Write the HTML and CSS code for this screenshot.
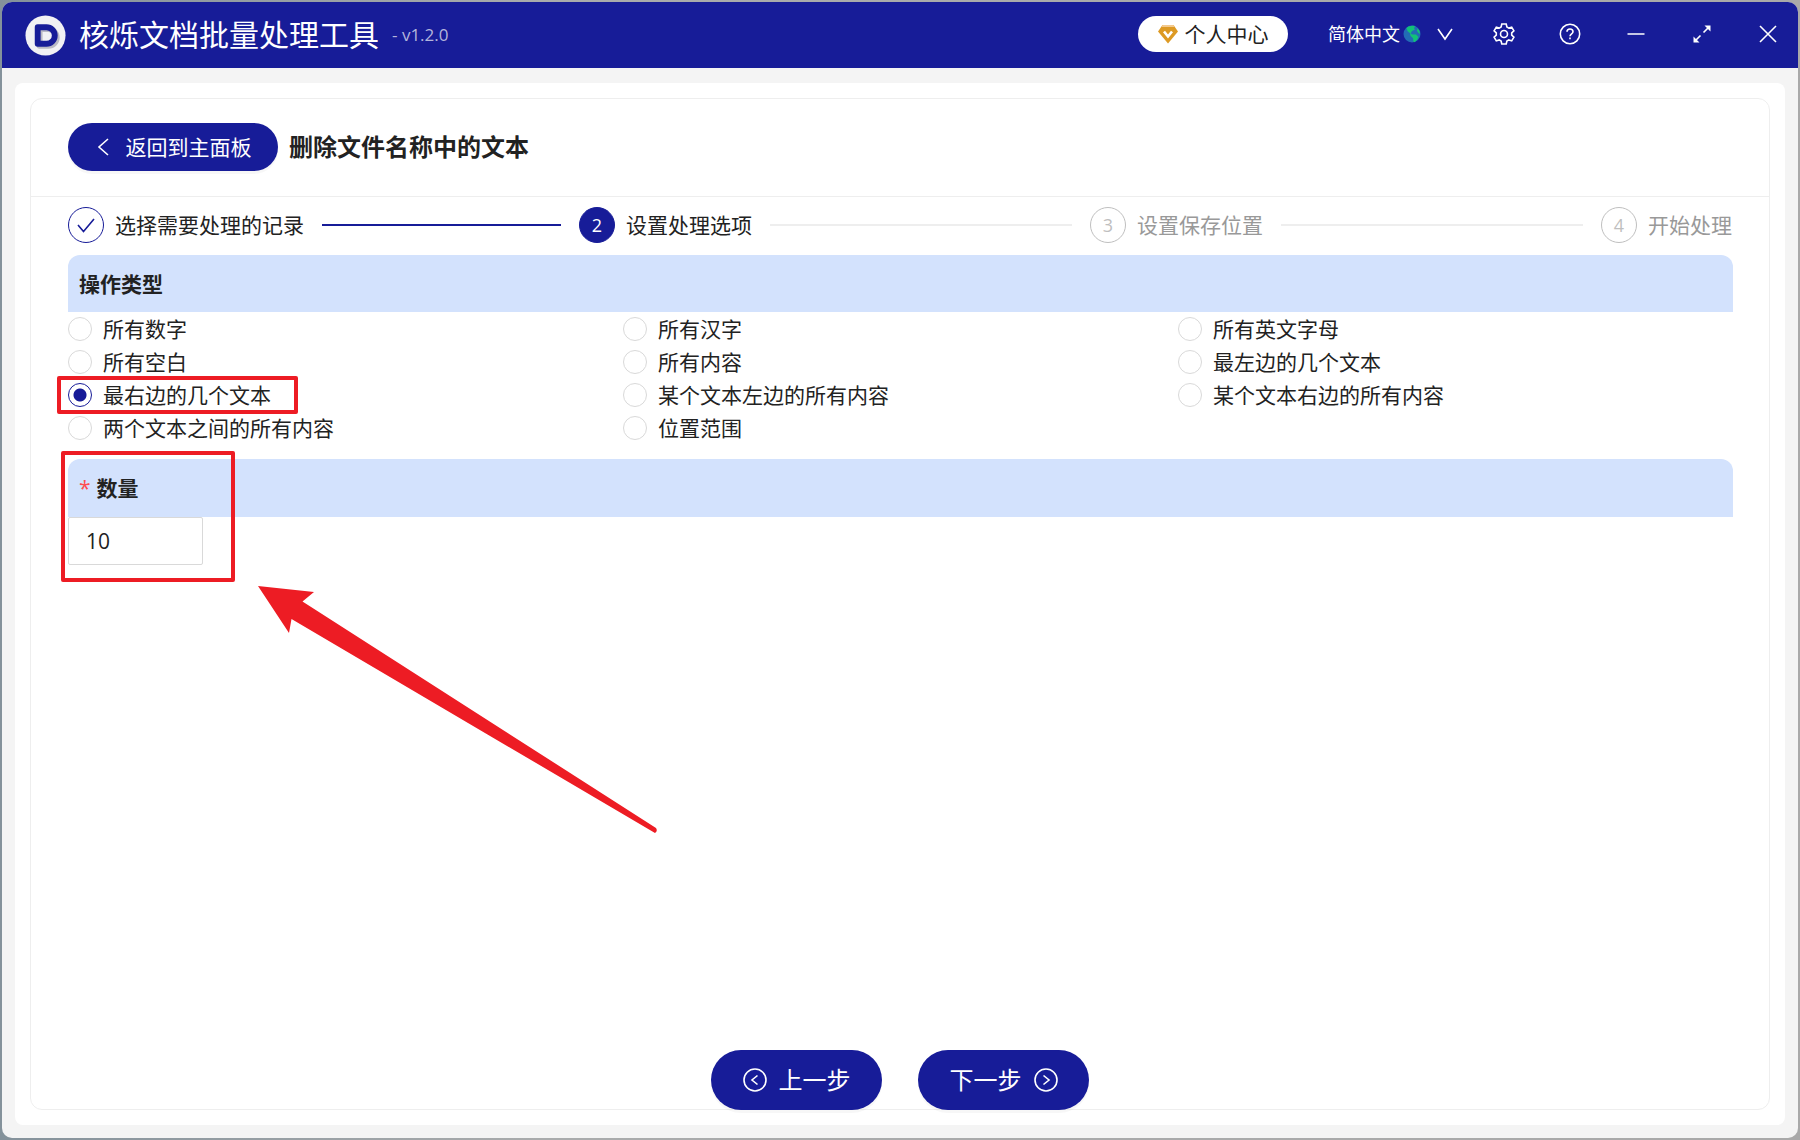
FILE: index.html
```html
<!DOCTYPE html>
<html lang="zh-CN">
<head>
<meta charset="utf-8">
<title>核烁文档批量处理工具</title>
<link rel="stylesheet" href="styles.css">
</head>
<body>
<div class="window">
  <header class="titlebar">
    <svg class="logo" viewBox="0 0 42 42" aria-hidden="true">
      <circle cx="21" cy="21" r="20.5" fill="#f1f1f4"/>
      <path d="M14 12.500h9a8.500 8.500 0 0 1 0 17h-9z" transform="translate(1 2)" fill="none" stroke="#b9b9c4" stroke-width="6" stroke-linejoin="round"/>
      <path d="M13 12.500h9a8.500 8.500 0 0 1 0 17h-9z" fill="none" stroke="#171c98" stroke-width="6" stroke-linejoin="round"/>
    </svg>
    <h1 class="app-name">核烁文档批量处理工具</h1>
    <span class="version">- v1.2.0</span>
    <div class="tools">
      <button class="account" type="button">
        <svg width="20" height="20" viewBox="0 0 20 20" aria-hidden="true">
          <path d="M4.500 1h11L20 7.500 10 19.500 0 7.500z" fill="#dd9a24"/>
          <path d="M4.500 1h11l1.500 2H3z" fill="#f3c98d"/>
          <path d="M6 7.500l4 5 4-5" fill="none" stroke="#fff" stroke-width="2.600"/>
        </svg>
        个人中心
      </button>
      <button class="language" type="button">
        简体中文
        <svg class="globe" width="18" height="18" viewBox="0 0 18 18" aria-hidden="true">
          <circle cx="9" cy="9" r="8.500" fill="#226cb5"/>
          <path d="M3.500 3C6 .6 9 .2 12 1l-1 2.500 1 1-3 1.500-1.500 2.500 2 1 3.500 0 2.500 2.500-1.500 3-2.500 2.200-1-.5-.5-3.500-2.500-2.500-.5-2.500L4.500 6zM14.500 3.200l2 2.800.5 3-2-1.500-1-2z" fill="#12c277"/>
        </svg>
        <svg class="caret" width="16" height="16" viewBox="0 0 16 16" aria-hidden="true"><path d="M1 3l7 10 7-10"/></svg>
      </button>
      <div class="window-actions">
        <button class="icon-button" type="button" aria-label="设置">
          <svg width="24" height="24" viewBox="0 0 24 24"><path d="M9.800 2h4.400l.7 3 1.900 1.100 2.900-1 2.200 3.800-2.200 2v2.200l2.200 2-2.200 3.800-2.900-1-1.900 1.100-.7 3H9.800l-.7-3-1.900-1.100-2.900 1-2.200-3.800 2.200-2v-2.200l-2.200-2 2.200-3.800 2.900 1L9.100 5z"/><circle cx="12" cy="12" r="3.500"/></svg>
        </button>
        <button class="icon-button" type="button" aria-label="帮助">
          <svg width="24" height="24" viewBox="0 0 24 24"><circle cx="12" cy="12" r="9.700"/><path d="M9 9.800c0-1.700 1.300-2.800 3-2.800s3 1.100 3 2.700c0 2-3 2.200-3 4.500M12 15.500v1.800"/></svg>
        </button>
        <button class="icon-button" type="button" aria-label="最小化">
          <svg width="24" height="24" viewBox="0 0 24 24"><path d="M3.500 12h17"/></svg>
        </button>
        <button class="icon-button" type="button" aria-label="最大化">
          <svg width="24" height="24" viewBox="0 0 24 24"><path d="M13.500 10.500l5-5M10.500 13.500l-5 5"/><path class="solid" d="M14.500 3.500h6v6zM3.500 14.500v6h6z"/></svg>
        </button>
        <button class="icon-button" type="button" aria-label="关闭">
          <svg width="24" height="24" viewBox="0 0 24 24"><path d="M4 4l16 16M20 4L4 20"/></svg>
        </button>
      </div>
    </div>
  </header>

  <main class="sheet">
    <div class="panel">
      <div class="panel-head">
        <button class="back" type="button">
          <svg width="12" height="20" viewBox="0 0 12 20" aria-hidden="true"><path d="M11 2L2 10l9 8"/></svg>
          返回到主面板
        </button>
        <h2 class="page-title">删除文件名称中的文本</h2>
      </div>

      <ol class="steps">
        <li class="step done">
          <span class="step-mark"><svg width="20" height="20" viewBox="0 0 20 20" aria-label="已完成"><path d="M2 10l5.500 6.500L18 4"/></svg></span>
          <span class="step-label">选择需要处理的记录</span>
        </li>
        <li class="step current" aria-current="step"><span class="step-mark">2</span><span class="step-label">设置处理选项</span></li>
        <li class="step"><span class="step-mark">3</span><span class="step-label">设置保存位置</span></li>
        <li class="step"><span class="step-mark">4</span><span class="step-label">开始处理</span></li>
      </ol>

      <form class="form">
        <fieldset class="group">
          <legend class="band">操作类型</legend>
          <div class="options">
            <label class="option"><input type="radio" name="kind">所有数字</label>
            <label class="option"><input type="radio" name="kind">所有汉字</label>
            <label class="option"><input type="radio" name="kind">所有英文字母</label>
            <label class="option"><input type="radio" name="kind">所有空白</label>
            <label class="option"><input type="radio" name="kind">所有内容</label>
            <label class="option"><input type="radio" name="kind">最左边的几个文本</label>
            <label class="option marked"><input type="radio" name="kind" checked>最右边的几个文本</label>
            <label class="option"><input type="radio" name="kind">某个文本左边的所有内容</label>
            <label class="option"><input type="radio" name="kind">某个文本右边的所有内容</label>
            <label class="option"><input type="radio" name="kind">两个文本之间的所有内容</label>
            <label class="option"><input type="radio" name="kind">位置范围</label>
          </div>
        </fieldset>

        <div class="field">
          <label class="band" for="count"><span class="required">*</span>数量</label>
          <input class="count" id="count" type="text" inputmode="numeric" value="10">
          <svg class="arrow" width="400" height="250" viewBox="0 0 400 250" aria-hidden="true">
            <path d="M0 0L56 6 44.500 15.500 398 242Q400 245 397 247L33.500 33 31 47z"/>
          </svg>
        </div>
      </form>

      <div class="actions">
        <button class="nav-button" type="button">
          <svg width="24" height="24" viewBox="0 0 24 24" aria-hidden="true"><circle cx="12" cy="12" r="11"/><path d="M14.500 7.500L9 12l5.500 4.500"/></svg>
          上一步
        </button>
        <button class="nav-button" type="button">
          下一步
          <svg width="24" height="24" viewBox="0 0 24 24" aria-hidden="true"><circle cx="12" cy="12" r="11"/><path d="M9.500 7.500L15 12l-5.500 4.500"/></svg>
        </button>
      </div>
    </div>
  </main>
</div>
</body>
</html>
```
FILE: styles.css
```css
:root {
  --brand: #171c98;
  --band: #d3e2fd;
  --line: #eeeeee;
  --text: #222222;
  --mark: #ed1c24;
}

*, *::before, *::after { box-sizing: border-box; }

body {
  margin: 0;
  min-height: 100vh;
  padding: 2px;
  display: flex;
  background: linear-gradient(90deg, #84929b, #a9abac 30%, #a9a9a9);
  color: var(--text);
  font: 21px/32px "Open Sans", "Noto Sans CJK SC", sans-serif;
}

button, input { font: inherit; color: inherit; }
button { border: 0; background: none; padding: 0; cursor: pointer; }
h1, h2, ol, fieldset, legend { margin: 0; padding: 0; }
svg { display: block; flex: none; fill: none; stroke: currentColor; stroke-width: 1.6; }

.window {
  flex: 1;
  min-width: 0;
  display: flex;
  flex-direction: column;
  background: #f4f4f4;
  border-radius: 10px;
  overflow: hidden;
}

/* Title bar */
.titlebar {
  height: 66px;
  padding: 0 18px 0 23px;
  display: flex;
  align-items: center;
  background: var(--brand);
  color: #fff;
}
.logo { width: 41px; height: 41px; stroke: none; }
.app-name { margin-left: 13px; font-size: 30px; font-weight: 400; white-space: nowrap; }
.version { margin-left: 13px; font-size: 17px; color: #b3b5dc; white-space: nowrap; }
.tools { margin-left: auto; display: flex; align-items: center; padding-bottom: 2px; }
.account {
  width: 150px;
  height: 36px;
  display: flex;
  align-items: center;
  justify-content: center;
  gap: 7px;
  border-radius: 18px;
  background: #fff;
  color: var(--text);
}
.account svg, .globe { stroke: none; }
.language { margin-left: 40px; display: flex; align-items: center; font-size: 18px; }
.globe { margin-left: 3px; }
.caret { margin-left: 16px; }
.window-actions { margin-left: 39px; display: flex; gap: 42px; }
.icon-button { width: 24px; height: 24px; }
.solid { fill: currentColor; stroke: none; }

/* Content sheet */
.sheet {
  flex: 1;
  margin: 15px 13px 13px;
  padding: 15px;
  display: flex;
  background: #fff;
  border-radius: 8px;
}
.panel {
  flex: 1;
  min-width: 0;
  display: flex;
  flex-direction: column;
  border: 1px solid var(--line);
  border-radius: 12px;
}
.panel-head {
  height: 98px;
  padding: 0 37px 2px;
  display: flex;
  align-items: center;
  gap: 11px;
  border-bottom: 1px solid var(--line);
}
.back {
  width: 210px;
  height: 48px;
  padding-left: 2px;
  display: flex;
  align-items: center;
  justify-content: center;
  gap: 17px;
  border-radius: 24px;
  background: var(--brand);
  color: #fff;
  box-shadow: 0 3px 0 rgba(0, 0, 0, .03);
}
.page-title { font-size: 24px; font-weight: 700; }

/* Steps */
.steps {
  margin: 10px 37px 12px;
  display: flex;
  gap: 18px;
  list-style: none;
}
.step { flex: 1; display: flex; align-items: center; color: #999; white-space: nowrap; }
.step:last-child { flex: none; }
.step:not(:last-child)::after {
  content: "";
  flex: 1;
  height: 2px;
  margin-left: 18px;
  background: #eee;
}
.step.done::after { background: var(--brand); }
.step-mark {
  width: 36px;
  height: 36px;
  margin-right: 11px;
  display: grid;
  place-items: center;
  border: 1px solid #bfbfbf;
  border-radius: 50%;
  color: #bfbfbf;
  font-size: 18px;
}
.done, .current { color: var(--text); }
.done .step-mark { border-color: var(--brand); color: var(--brand); }
.current .step-mark { border-color: var(--brand); background: var(--brand); color: #fff; }
.step.done::after { background: var(--brand); }

/* Form */
.form { flex: 1; padding: 0 36px 0 37px; }
.group { border: 0; min-width: 0; }
.band {
  width: 100%;
  height: 57px;
  padding: 0 11px;
  display: flex;
  align-items: center;
  background: var(--band);
  border-radius: 12px 12px 0 0;
  font-weight: 700;
}
.options { display: grid; grid-template-columns: repeat(3, 1fr); grid-auto-rows: 33px; }
.option { position: relative; display: flex; align-items: center; justify-self: start; gap: 11px; }
.option input {
  appearance: none;
  width: 24px;
  height: 24px;
  margin: 0;
  border: 1px solid #d9d9d9;
  border-radius: 50%;
}
.option input:checked {
  border-color: var(--brand);
  background: radial-gradient(circle, var(--brand) 6px, transparent 7px);
}
.field { position: relative; margin-top: 15px; }
.field .band { height: 58px; }
.required { margin-right: 6px; color: #ff4d4f; font-weight: 400; }
.count {
  display: block;
  width: 135px;
  height: 48px;
  padding: 0 17px;
  border: 1px solid #d9d9d9;
  border-radius: 2px;
  background: #fff;
}

/* Red callouts over the form */
.marked::before, .field::before {
  content: "";
  position: absolute;
  border: 4px solid var(--mark);
  border-radius: 2px;
}
.marked::before { inset: -2px -27px -3px -11px; }
.field::before { left: -7px; top: -8px; width: 174px; height: 131px; }
.arrow { position: absolute; left: 190px; top: 127px; fill: var(--mark); stroke: none; }

/* Footer buttons */
.actions { display: flex; justify-content: center; gap: 36px; margin-bottom: -1px; }
.nav-button {
  width: 171px;
  height: 60px;
  display: flex;
  align-items: center;
  justify-content: center;
  gap: 12px;
  border-radius: 30px;
  background: var(--brand);
  color: #fff;
  font-size: 24px;
  box-shadow: 0 3px 0 rgba(0, 0, 0, .03);
}
```
